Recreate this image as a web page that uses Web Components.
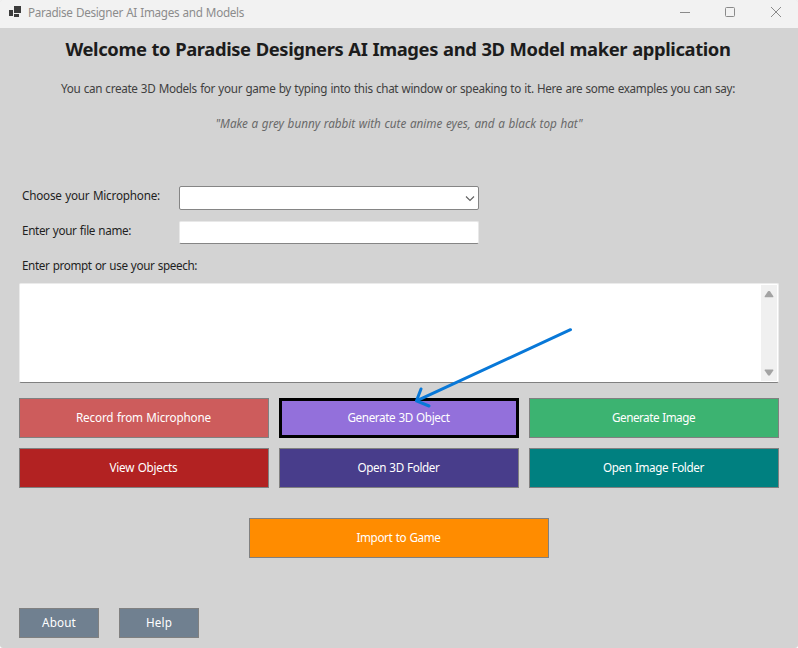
<!DOCTYPE html>
<html lang="en">
<head>
<meta charset="utf-8">
<title>Paradise Designer AI Images and Models</title>
<style>
html, body { margin: 0; background: #fff; }
body { width: 798px; height: 648px; overflow: hidden; }
</style>
</head>
<body>
<app-window></app-window>
<script>
const define = (name, html, ready) => {
  const template = document.createElement('template');
  template.innerHTML = html;
  customElements.define(name, class extends HTMLElement {
    connectedCallback() {
      if (this.shadowRoot) return;
      this.attachShadow({ mode: 'open' }).append(template.content.cloneNode(true));
      if (ready) ready(this, this.shadowRoot);
    }
  });
};

// One line of text whose tracking is adjusted to fill the width in "w".
define('fit-text', `
<style>
:host { display: block; white-space: nowrap; flex: none; word-spacing: .6px; }
span { display: inline-block; vertical-align: top; transform: translateY(var(--lift, -1px)); }
</style><span><slot></slot></span>`, (el, root) => {
  const span = root.querySelector('span');
  const w = +el.getAttribute('w');
  const n = el.textContent.length;
  span.style.letterSpacing = ((w - span.getBoundingClientRect().width) / n).toFixed(4) + 'px';
  el.style.width = w + 'px';
});

define('title-bar', `
<style>
:host { display: flex; height: 28px; background: #f2f2f2; color: #8c8c8c; align-items: flex-start; }
.logo { margin: 6px 7px 0 9px; }
.label { line-height: 26px; flex: 1; }
.controls { margin-right: 16px; }
svg { display: block; flex: none; }
</style>
<svg class="logo" width="12" height="12"><path fill="#3c3c3c" d="M5 0h7v7H5zM0 4h4v6H0zM5 8h5v3H5z"/></svg>
<div class="label"><slot></slot></div>
<svg class="controls" width="102" height="24" fill="none" stroke="#8a8a8a">
<path d="M0 12.5h10"/><rect x="45.5" y="7.5" width="9" height="9" rx="1"/><path d="M91 7l10 10M101 7l-10 10"/></svg>`);

define('field-row', `
<style>
:host { display: grid; grid-template-columns: 157px 300px; padding-left: 22px; height: 35px; }
.label { line-height: 20px; }
</style><div class="label"><slot name="label"></slot></div><slot></slot>`);

define('combo-box', `
<style>
:host { display: flex; box-sizing: border-box; height: 24px; border: 1px solid #858585; border-radius: 2px; background: #fff; justify-content: flex-end; align-items: center; padding-right: 3px; }
</style><svg width="10" height="8" fill="none" stroke="#606060" stroke-width="1.1"><path d="M1 2.5l4 4 4-4"/></svg>`);

define('text-box', `
<style>
:host { display: block; box-sizing: border-box; height: 23px; border: 1px solid #e8e8e8; border-bottom-color: #858585; border-radius: 2px; background: #fff; }
</style>`);

define('prompt-box', `
<style>
:host { display: flex; box-sizing: border-box; width: 760px; height: 100px; margin-left: 19px; border: 1px solid #ebebeb; border-bottom-color: #808080; border-radius: 2px; background: #fff; justify-content: flex-end; }
.bar { width: 16px; height: 96px; margin: 1px 1px 0 0; background: #f0f0f0; display: flex; flex-direction: column; justify-content: space-between; align-items: center; padding: 6px 0 5px; box-sizing: border-box; }
svg { display: block; }
</style><div class="bar">
<svg width="10" height="7"><path fill="#a3a3a3" d="M4 .3Q5-.4 6 .3L9.3 5.2Q9.6 6.2 8.8 6.2H1.2Q.4 6.2.7 5.2z"/></svg>
<svg width="10" height="7"><path fill="#a3a3a3" d="M4 6.3Q5 7 6 6.3L9.3 1.4Q9.6.4 8.8.4H1.2Q.4.4.7 1.4z"/></svg></div>`);

define('color-button', `
<style>
:host { display: flex; box-sizing: border-box; height: 40px; border: 1px solid #808080; justify-content: center; align-items: center; color: #fff; line-height: 20px; padding: 0 1px 1px 0; }
:host([selected]) { border: 3px solid #000; }
:host([small]) { width: 80px; height: 30px; padding: 0; }
:host([wide]) { width: 300px; }
</style><slot></slot>`, el => { el.style.background = el.getAttribute('color'); });

define('pointer-arrow', `
<style>
:host { position: absolute; left: 412px; top: 326px; }
svg { display: block; }
</style><svg width="164" height="86" fill="none" stroke="#0878d8" stroke-width="3" stroke-linecap="round" stroke-linejoin="round"><path d="M158.5 3.7L4.5 74.8M9 63L4.5 74.8L17 80"/></svg>`);

define('app-window', `
<style>
:host { display: flex; flex-direction: column; position: relative; width: 798px; height: 648px; background: #d3d3d3; border-radius: 2px 2px 3px 3px; overflow: hidden; font: 11.7px "Noto Sans", "Open Sans", sans-serif; color: #1f1f1f; }
header { height: 158px; display: flex; flex-direction: column; align-items: center; padding-right: 2px; }
.h { --lift: 0; font-size: 18.4px; font-weight: 700; line-height: 28px; margin-top: 7px; color: #1c1c1c; }
.p { line-height: 20px; margin-top: 16px; color: #404040; }
.q { line-height: 20px; margin: 15px 0 0 2px; font-style: italic; color: #696969; }
.prompt { height: 27px; line-height: 20px; padding-left: 22px; }
.grid { display: grid; grid-template-columns: 250px 240px 250px; gap: 10px; margin: 15px 19px 30px; }
.main { display: flex; justify-content: center; }
footer { display: flex; gap: 20px; margin: 50px 0 0 19px; }
</style>
<title-bar><fit-text w="216">Paradise Designer AI Images and Models</fit-text></title-bar>
<header>
<fit-text class="h" w="665">Welcome to Paradise Designers AI Images and 3D Model maker application</fit-text>
<fit-text class="p" w="674">You can create 3D Models for your game by typing into this chat window or speaking to it. Here are some examples you can say:</fit-text>
<fit-text class="q" w="367">"Make a grey bunny rabbit with cute anime eyes, and a black top hat"</fit-text>
</header>
<field-row><fit-text slot="label" w="138">Choose your Microphone:</fit-text><combo-box></combo-box></field-row>
<field-row><fit-text slot="label" w="109">Enter your file name:</fit-text><text-box></text-box></field-row>
<div class="prompt"><fit-text w="175">Enter prompt or use your speech:</fit-text></div>
<prompt-box></prompt-box>
<div class="grid">
<color-button color="#cd5c5c"><fit-text w="135">Record from Microphone</fit-text></color-button>
<color-button color="#9370db" selected><fit-text w="102">Generate 3D Object</fit-text></color-button>
<color-button color="#3cb371"><fit-text w="83">Generate Image</fit-text></color-button>
<color-button color="#b22222"><fit-text w="68">View Objects</fit-text></color-button>
<color-button color="#483d8b"><fit-text w="82">Open 3D Folder</fit-text></color-button>
<color-button color="#008080"><fit-text w="101">Open Image Folder</fit-text></color-button>
</div>
<div class="main"><color-button color="#ff8c00" wide><fit-text w="84">Import to Game</fit-text></color-button></div>
<footer>
<color-button color="#708090" small><fit-text w="34">About</fit-text></color-button>
<color-button color="#708090" small><fit-text w="26">Help</fit-text></color-button>
</footer>
<pointer-arrow></pointer-arrow>`);
</script>
</body>
</html>
